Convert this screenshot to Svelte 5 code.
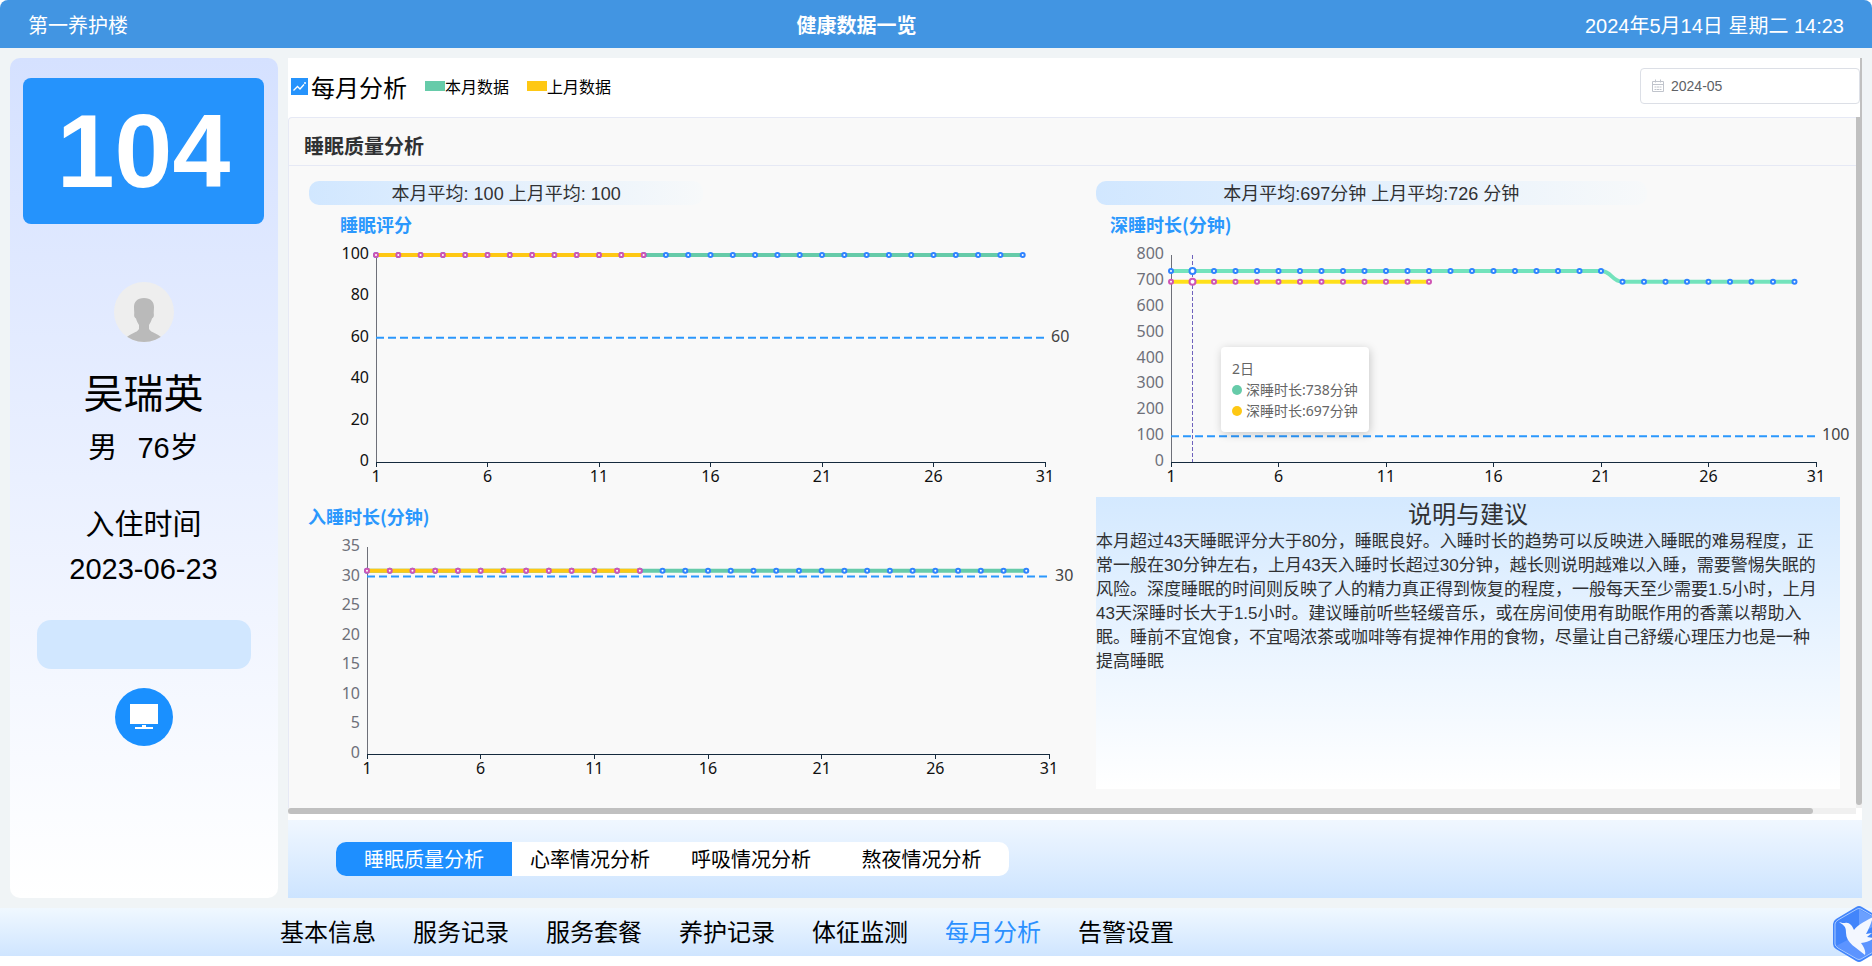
<script lang="ts">
	type Series = { values: number[]; color: string; stroke: string };
	type Chart = {
		title: string;
		titleX: number;
		left: number;
		right: number;
		max: number;
		step: number;
		mark: number;
		muted: boolean;
		hover?: number;
		series: Series[];
	};

	const TOP = 50;
	const BOTTOM = 257;
	const BLUE = '#2f83ff';
	const PINK = '#cf55b4';

	const days = [1, 6, 11, 16, 21, 26, 31];
	const menus = ['基本信息', '服务记录', '服务套餐', '养护记录', '体征监测', '每月分析', '告警设置'];
	const tabs = [
		{ name: '睡眠质量分析', width: 176 },
		{ name: '心率情况分析', width: 156 },
		{ name: '呼吸情况分析', width: 166 },
		{ name: '熬夜情况分析', width: 175 }
	];
	const advice = [
		'本月超过43天睡眠评分大于80分，睡眠良好。入睡时长的趋势可以反映进入睡眠的难易程度，正',
		'常一般在30分钟左右，上月43天入睡时长超过30分钟，越长则说明越难以入睡，需要警惕失眠的',
		'风险。深度睡眠的时间则反映了人的精力真正得到恢复的程度，一般每天至少需要1.5小时，上月',
		'43天深睡时长大于1.5小时。建议睡前听些轻缓音乐，或在房间使用有助眠作用的香薰以帮助入',
		'眠。睡前不宜饱食，不宜喝浓茶或咖啡等有提神作用的食物，尽量让自己舒缓心理压力也是一种',
		'提高睡眠'
	];

	const fill = (n: number, v: number) => Array(n).fill(v);

	const score: Chart = {
		title: '睡眠评分',
		titleX: 31,
		left: 67,
		right: 8,
		max: 100,
		step: 20,
		mark: 60,
		muted: false,
		series: [
			{ values: fill(30, 100), color: '#66cba9', stroke: BLUE },
			{ values: fill(13, 100), color: '#fec814', stroke: PINK }
		]
	};
	const deep: Chart = {
		title: '深睡时长(分钟)',
		titleX: 14,
		left: 75,
		right: 24,
		max: 800,
		step: 100,
		mark: 100,
		muted: true,
		hover: 2,
		series: [
			{ values: [...fill(21, 738), ...fill(9, 697)], color: '#73e3bc', stroke: BLUE },
			{ values: fill(13, 697), color: '#ffe01a', stroke: PINK }
		]
	};
	const asleep: Chart = {
		title: '入睡时长(分钟)',
		titleX: -1,
		left: 58,
		right: 4,
		max: 35,
		step: 5,
		mark: 30,
		muted: true,
		series: [
			{ values: fill(30, 31), color: '#66cba9', stroke: BLUE },
			{ values: fill(13, 31), color: '#fec814', stroke: PINK }
		]
	};

	let colWidth = $state(744);
	let activeTab = $state(0);
	let activeMenu = $state(5);
	let month = $state('2024-05');

	function xAt(c: Chart, day: number) {
		return c.left + ((day - 1) / 30) * (colWidth - c.right - c.left);
	}

	function yAt(c: Chart, v: number) {
		return BOTTOM - (v / c.max) * (BOTTOM - TOP);
	}

	function ticks(c: Chart) {
		return Array.from({ length: c.max / c.step + 1 }, (_, i) => i * c.step);
	}

	function linePath(c: Chart, values: number[]) {
		let d = `M${xAt(c, 1)} ${yAt(c, values[0])}`;
		for (let i = 1; i < values.length; i++) {
			const x0 = xAt(c, i);
			const x1 = xAt(c, i + 1);
			const mid = (x0 + x1) / 2;
			d += `C${mid} ${yAt(c, values[i - 1])} ${mid} ${yAt(c, values[i])} ${x1} ${yAt(c, values[i])}`;
		}
		return d;
	}
</script>

{#snippet lineChart(c: Chart)}
	<svg class="chart" class:muted={c.muted} role="img" aria-label={c.title}>
		<text class="chart-title" x={c.titleX} y="27">{c.title}</text>
		<g shape-rendering="crispEdges">
			<line class="y-axis" x1={c.left} y1={TOP} x2={c.left} y2={BOTTOM} />
			<line class="x-axis" x1={c.left} y1={BOTTOM} x2={colWidth - c.right} y2={BOTTOM} />
			{#each days as day}
				<line class="x-axis" x1={xAt(c, day)} y1={BOTTOM} x2={xAt(c, day)} y2={BOTTOM + 5} />
			{/each}
		</g>
		{#each ticks(c) as v}
			<text class="y-label" x={c.left - 7} y={yAt(c, v) + 4}>{v}</text>
		{/each}
		{#each days as day}
			<text class="x-label" x={xAt(c, day)} y={BOTTOM + 20}>{day}</text>
		{/each}
		{#if c.hover}
			<line class="pointer" x1={xAt(c, c.hover)} y1={TOP} x2={xAt(c, c.hover)} y2={BOTTOM} />
		{/if}
		{#each c.series as s}
			<path class="series" d={linePath(c, s.values)} stroke={s.color} />
			{#each s.values as v, i}
				<circle
					class="point"
					cx={xAt(c, i + 1)}
					cy={yAt(c, v)}
					r={c.hover === i + 1 ? 3 : 2}
					stroke={s.stroke}
				/>
			{/each}
		{/each}
		<line class="mark" x1={c.left} y1={yAt(c, c.mark)} x2={colWidth - c.right} y2={yAt(c, c.mark)} />
		<text class="mark-label" x={colWidth - c.right + 6} y={yAt(c, c.mark) + 4}>{c.mark}</text>
	</svg>
{/snippet}

<div class="page">
	<header class="topbar">
		<span>第一养护楼</span>
		<h1>健康数据一览</h1>
		<time>2024年5月14日 星期二 14:23</time>
	</header>

	<div class="content">
		<aside class="profile">
			<div class="room">104</div>
			<svg class="avatar" viewBox="0 0 60 60">
				<defs>
					<clipPath id="avatar-clip"><circle cx="30" cy="30" r="30" /></clipPath>
				</defs>
				<g clip-path="url(#avatar-clip)">
					<rect width="60" height="60" fill="#eee" />
					<path
						fill="#bababa"
						d="M30 16c-7 0-10 4-10 9 0 3 .4 5 .2 7-.4 3 .8 4 1.800 4.500.6 2.500 1.800 4.500 3 6.500v4c-2 4-9 4-14 10v4h38v-4c-5-6-12-6-14-10v-4c1.200-2 2.400-4 3-6.500 1-.5 2.200-1.500 1.800-4.500-.2-2 .2-4 .2-7 0-5-3-9-10-9z"
					/>
				</g>
			</svg>
			<div class="name">吴瑞英</div>
			<div class="meta"><span>男</span><span>76岁</span></div>
			<div class="checkin">
				<div>入住时间</div>
				<div>2023-06-23</div>
			</div>
			<div class="blank"></div>
			<button class="screen" aria-label="监控">
				<svg viewBox="0 0 28 28" width="28" height="28">
					<path fill="#fff" d="M0 1h28v20H0zM12 22h4v2h7v2H5v-2h7z" />
				</svg>
			</button>
		</aside>

		<main>
			<div class="toolbar">
				<svg class="trend" viewBox="0 0 17 17">
					<rect width="17" height="17" fill="#2593fc" />
					<path d="M2.500 12.500l4-4 2.500 2.500 4-4.500" fill="none" stroke="#fff" stroke-width="1.300" />
					<circle cx="14" cy="5" r="1" fill="#fff" />
				</svg>
				<h2>每月分析</h2>
				<span class="legend"><i class="current"></i>本月数据</span>
				<span class="legend"><i class="previous"></i>上月数据</span>
				<div class="picker">
					<svg viewBox="0 0 14 14" width="14" height="14" fill="none" stroke="#c0c4cc">
						<path d="M1.500 2.500h11v10h-11zM1.500 5.500h11M4.500.5v3M9.500.5v3M3.500 8h2M6 8h2M8.500 8h2M3.500 10.500h2M6 10.500h2M8.500 10.500h2" />
					</svg>
					<input type="text" aria-label="选择月份" bind:value={month} />
				</div>
			</div>

			<div class="scroller">
				<section class="card">
					<h3>睡眠质量分析</h3>
					<div class="grid">
						<div class="cell" bind:clientWidth={colWidth}>
							<div class="average">本月平均: 100 上月平均: 100</div>
							{@render lineChart(score)}
						</div>
						<div class="cell">
							<div class="average wide">本月平均:697分钟 上月平均:726 分钟</div>
							<div class="plot">
								{@render lineChart(deep)}
								<div class="tooltip">
									<div>2日</div>
									<div><i class="current"></i>深睡时长:738分钟</div>
									<div><i class="previous"></i>深睡时长:697分钟</div>
								</div>
							</div>
						</div>
						<div class="cell">
							{@render lineChart(asleep)}
						</div>
						<div class="advice">
							<h4>说明与建议</h4>
							<p>
								{#each advice as line}
									{line}<br />
								{/each}
							</p>
						</div>
					</div>
				</section>
				<div class="bar-y"><div></div></div>
			</div>
			<div class="bar-x"><div></div></div>

			<div class="tabbar">
				<div class="tabs">
					{#each tabs as tab, i}
						<button
							class:active={activeTab === i}
							style="width: {tab.width}px"
							onclick={() => (activeTab = i)}>{tab.name}</button
						>
					{/each}
				</div>
			</div>
		</main>
	</div>

	<nav>
		{#each menus as menu, i}
			<a
				href="#menu-{i}"
				class:active={activeMenu === i}
				onclick={(e) => {
					e.preventDefault();
					activeMenu = i;
				}}>{menu}</a
			>
		{/each}
	</nav>

	<svg class="bird" viewBox="0 0 52 56">
		<path fill="#4285fb" d="M23 1q3-2 6 0l20 12q3 2 3 5v20q0 3-3 5L29 55q-3 2-6 0L3 43q-3-2-3-5V18q0-3 3-5z" />
		<path fill="#6ba0ff" d="M26 3l23 13-17 9-6 3z" />
		<path fill="#5c94ff" d="M3 40l23-12 23 12-23 14z" />
		<path
			fill="none"
			stroke="#a9caff"
			d="M24 3q2-1 4 0l19 11q3 2 3 4v20q0 2-3 4L28 53q-2 1-4 0L5 42q-3-2-3-4V18q0-2 3-4z"
		/>
		<path
			fill="#f3f7ff"
			d="M6 16c3 1 4 1 6 1 4-1 7 2 9 7 3-4 9-8 19-13-2 6-4 12-7 17l6-1-5 4 8 1c-4 2-8 5-14 5 3 4 5 8 4 12-8-7-19-12-19-22 0-6-1-7-7-11z"
		/>
	</svg>
</div>

<style>
	:global(body) {
		background: #fff;
	}

	* {
		box-sizing: border-box;
	}

	.page {
		position: relative;
		display: flex;
		flex-direction: column;
		min-height: 100vh;
		padding-bottom: 10px;
		overflow: hidden;
		font-family: 'Liberation Sans', 'Noto Sans CJK SC', sans-serif;
		color: #000;
	}

	h1,
	h2,
	h3,
	h4,
	p {
		margin: 0;
	}

	button {
		border: 0;
		padding: 0;
		font-family: inherit;
		cursor: pointer;
	}

	.topbar {
		display: flex;
		align-items: center;
		justify-content: space-between;
		height: 48px;
		padding: 0 28px;
		border-radius: 8px 8px 0 0;
		background: #4295e2;
		color: #fff;
		font-size: 20px;
	}

	.topbar h1 {
		font-size: 20px;
	}

	.content {
		display: flex;
		flex: 1;
		gap: 10px;
		padding: 10px;
		background: #f0f4f6;
	}

	.profile {
		display: flex;
		flex-direction: column;
		align-items: center;
		flex: none;
		width: 268px;
		padding: 20px 14px 20px 13px;
		border-radius: 10px;
		background: linear-gradient(#d5e1ff, #fff);
		font-size: 29px;
	}

	.room {
		width: 100%;
		border-radius: 8px;
		background: #2593fc;
		color: #fff;
		font-size: 104px;
		font-weight: bold;
		line-height: 146px;
		text-align: center;
	}

	.avatar {
		width: 60px;
		height: 60px;
		margin: 58px 0 24px;
	}

	.name {
		font-size: 40px;
		line-height: 56px;
	}

	.meta {
		display: flex;
		gap: 20px;
		line-height: 52px;
	}

	.checkin {
		margin: 29px 0;
		line-height: 44px;
		text-align: center;
	}

	.blank {
		width: 214px;
		height: 49px;
		border-radius: 14px;
		background: #d1e7ff;
	}

	.screen {
		display: grid;
		place-items: center;
		width: 58px;
		height: 58px;
		margin-top: 19px;
		border-radius: 50%;
		background: #1a90ff;
	}

	main {
		display: flex;
		flex: 1;
		flex-direction: column;
		min-width: 0;
		background: #fff;
	}

	.toolbar {
		display: flex;
		align-items: center;
		height: 59px;
		padding: 0 0 3px 3px;
		border-right: 2px solid #c0c0c0;
	}

	.trend {
		width: 17px;
		height: 17px;
		margin-right: 3px;
	}

	.toolbar h2 {
		font-size: 24px;
		font-weight: normal;
	}

	.legend {
		display: flex;
		align-items: center;
		margin-left: 18px;
		font-size: 16px;
	}

	.legend i {
		width: 20px;
		height: 10px;
	}

	.current {
		background: #66cba9;
	}

	.previous {
		background: #fec814;
	}

	.picker {
		display: flex;
		align-items: center;
		gap: 6px;
		width: 220px;
		height: 36px;
		margin-left: auto;
		padding-left: 10px;
		border: 1px solid #dcdfe6;
		border-radius: 4px;
	}

	.picker input {
		flex: 1;
		min-width: 0;
		padding: 0;
		border: 0;
		outline: 0;
		background: none;
		color: #606266;
		font-family: inherit;
		font-size: 14px;
	}

	.scroller {
		display: flex;
		flex: 1;
	}

	.card {
		flex: 1;
		min-width: 0;
		border: 1px solid #e6e9f5;
		border-width: 1px 0 0 1px;
		border-radius: 4px 0 0 0;
		background: #f9f9f9;
		color: #303133;
	}

	.card h3 {
		padding: 11px 15px 0;
		border-bottom: 1px solid #e6e9f5;
		font-size: 20px;
		line-height: 36px;
	}

	.grid {
		display: grid;
		grid-template-columns: 1fr 1fr;
		column-gap: 43px;
		padding: 15px 16px 18px 20px;
	}

	.cell {
		min-width: 0;
	}

	.average {
		width: 53%;
		padding-top: 2px;
		border-radius: 10px;
		background: linear-gradient(to right, #d1e7ff, #f7f9fa);
		font-size: 18px;
		line-height: 22px;
		text-align: center;
	}

	.average.wide {
		width: 74%;
	}

	.plot {
		position: relative;
	}

	.chart {
		display: block;
		width: 100%;
		height: 292px;
		overflow: visible;
		font-family: 'Noto Sans', 'Noto Sans CJK SC', sans-serif;
		font-size: 16px;
	}

	.chart-title {
		fill: #2b98fd;
		font-family: 'Noto Sans CJK SC', sans-serif;
		font-size: 18px;
		font-weight: bold;
	}

	.y-axis {
		stroke: #6e7079;
	}

	.x-axis {
		stroke: #152a3d;
	}

	.x-label {
		fill: #111;
		text-anchor: middle;
	}

	.y-label {
		fill: #111;
		text-anchor: end;
	}

	.muted .y-label {
		fill: #6e7079;
	}

	.series {
		fill: none;
		stroke-width: 4;
	}

	.point {
		fill: #fff;
		stroke-width: 2;
	}

	.pointer {
		stroke: #6f62bd;
		stroke-dasharray: 4 2;
	}

	.mark {
		stroke: #2b98fd;
		stroke-width: 2;
		stroke-dasharray: 8 4;
	}

	.mark-label {
		fill: #444;
	}

	.tooltip {
		position: absolute;
		top: 142px;
		left: 125px;
		padding: 11px;
		border-radius: 4px;
		background: #fff;
		box-shadow: 1px 2px 10px rgba(0, 0, 0, 0.2);
		color: #666;
		font-family: 'Noto Sans', 'Noto Sans CJK SC', sans-serif;
		font-size: 14px;
		line-height: 21px;
		white-space: nowrap;
	}

	.tooltip i {
		display: inline-block;
		width: 10px;
		height: 10px;
		margin-right: 4px;
		border-radius: 50%;
	}

	.advice {
		padding-top: 2px;
		background: linear-gradient(#d4e9ff, #fff);
		font-size: 17px;
		line-height: 24px;
		white-space: nowrap;
	}

	.advice h4 {
		font-size: 24px;
		font-weight: normal;
		line-height: 31px;
		text-align: center;
	}

	.bar-y {
		width: 6px;
		background: #f0f0f0;
	}

	.bar-y div {
		height: calc(100% - 3px);
		border-radius: 0 0 3px 3px;
		background: #c0c0c0;
	}

	.bar-x {
		height: 6px;
		margin: 0 6px 6px 0;
		background: #f0f0f0;
	}

	.bar-x div {
		width: calc(100% - 43px);
		height: 6px;
		border-radius: 3px;
		background: #c0c0c0;
	}

	.tabbar {
		padding: 22px 48px;
		background: linear-gradient(#f0f7ff, #cde4ff);
	}

	.tabs {
		display: inline-flex;
		overflow: hidden;
		border-radius: 10px;
		background: #fff;
		vertical-align: top;
	}

	.tabs button {
		height: 34px;
		padding-bottom: 2px;
		background: none;
		color: #000;
		font-size: 20px;
	}

	.tabs .active {
		background: #1e8fff;
		color: #fff;
	}

	nav {
		display: flex;
		align-items: center;
		gap: 37px;
		height: 48px;
		padding: 0 0 4px 280px;
		background: linear-gradient(#f0f8ff, #cfe5ff);
		font-size: 24px;
	}

	nav a {
		color: #000;
		text-decoration: none;
	}

	nav .active {
		color: #2b90ff;
	}

	.bird {
		position: absolute;
		right: -13px;
		bottom: 4px;
		width: 52px;
		height: 56px;
	}
</style>
